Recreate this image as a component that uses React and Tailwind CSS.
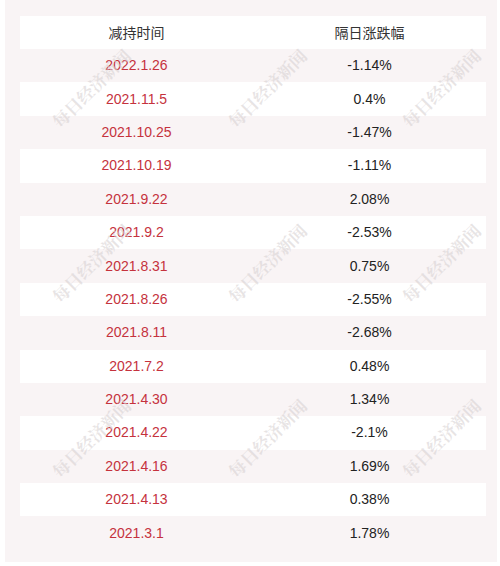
import React from 'react';

const rows = [
  ['2022.1.26', '-1.14%'],
  ['2021.11.5', '0.4%'],
  ['2021.10.25', '-1.47%'],
  ['2021.10.19', '-1.11%'],
  ['2021.9.22', '2.08%'],
  ['2021.9.2', '-2.53%'],
  ['2021.8.31', '0.75%'],
  ['2021.8.26', '-2.55%'],
  ['2021.8.11', '-2.68%'],
  ['2021.7.2', '0.48%'],
  ['2021.4.30', '1.34%'],
  ['2021.4.22', '-2.1%'],
  ['2021.4.16', '1.69%'],
  ['2021.4.13', '0.38%'],
  ['2021.3.1', '1.78%'],
];

// watermark centres
const marks = [
  [91, 88], [267, 88], [441, 88],
  [91, 263], [267, 263], [441, 263],
  [91, 438], [267, 438], [441, 438],
];

const App = () => {
  return (
    <div className="w-[500px] h-[566px] bg-white pl-[5px] pr-[3px] pb-[4px]">
      <div className="relative h-full bg-[#f9f4f5] pt-[16px] pl-[15px] pr-[11px] font-['Liberation_Sans',Arial,sans-serif] text-[14px] overflow-hidden">
        <div className="flex flex-col">
          <div className="grid grid-cols-2 h-[33px] bg-white items-center text-center text-[#333] font-['Noto_Sans_CJK_SC',sans-serif]">
            <div>减持时间</div>
            <div>隔日涨跌幅</div>
          </div>
          {rows.map(([date, pct], i) => (
            <div
              key={date}
              className={`grid grid-cols-2 h-[33.4px] items-center text-center ${i % 2 === 1 ? 'bg-white' : ''}`}
            >
              <div className="text-[#c5323d]">{date}</div>
              <div className="text-[#222]">{pct}</div>
            </div>
          ))}
        </div>

        {/* watermark */}
        {marks.map(([x, y], i) => (
          <div
            key={i}
            className="absolute pointer-events-none whitespace-nowrap text-[17px] font-bold text-[#d8d2d3]/60 font-['Noto_Serif_CJK_SC','Noto_Sans_CJK_SC',serif] -translate-x-1/2 -translate-y-1/2 -rotate-45"
            style={{ left: x - 5, top: y }}
          >
            每日经济新闻
          </div>
        ))}
      </div>
    </div>
  );
};

export default App;
